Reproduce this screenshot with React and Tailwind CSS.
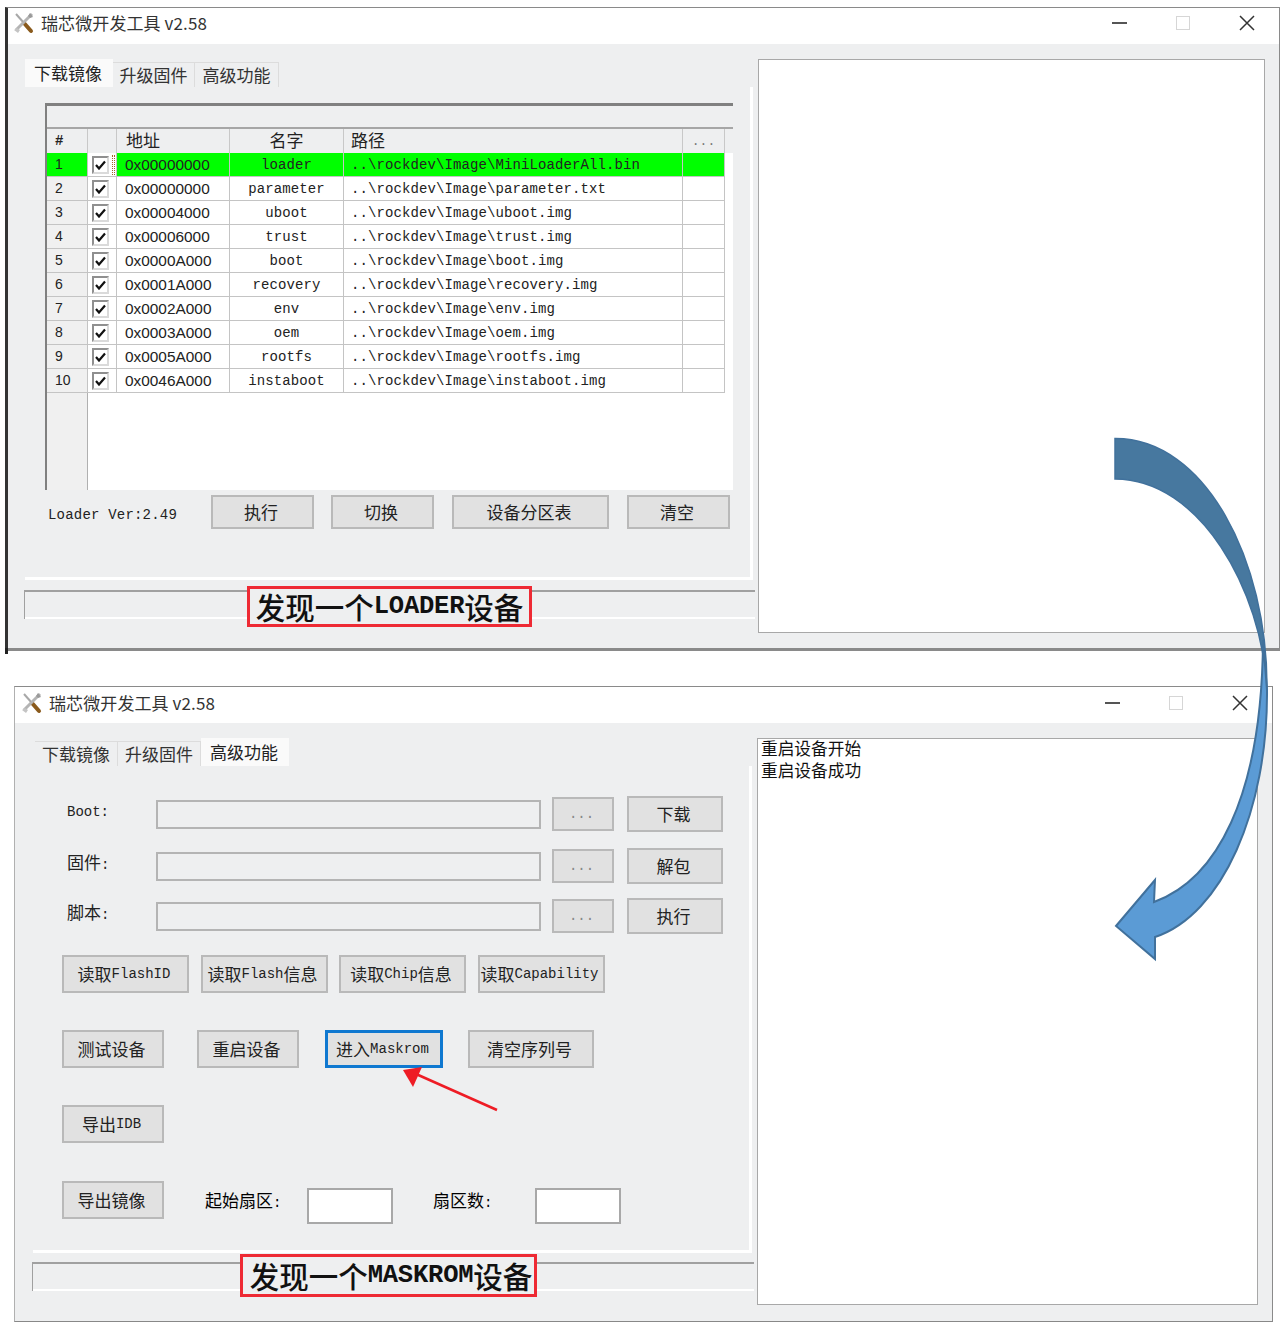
const cjk = "font-['Noto_Sans_CJK_SC',sans-serif]"

const rows = [
  ['1', '0x00000000', 'loader', '..\\rockdev\\Image\\MiniLoaderAll.bin'],
  ['2', '0x00000000', 'parameter', '..\\rockdev\\Image\\parameter.txt'],
  ['3', '0x00004000', 'uboot', '..\\rockdev\\Image\\uboot.img'],
  ['4', '0x00006000', 'trust', '..\\rockdev\\Image\\trust.img'],
  ['5', '0x0000A000', 'boot', '..\\rockdev\\Image\\boot.img'],
  ['6', '0x0001A000', 'recovery', '..\\rockdev\\Image\\recovery.img'],
  ['7', '0x0002A000', 'env', '..\\rockdev\\Image\\env.img'],
  ['8', '0x0003A000', 'oem', '..\\rockdev\\Image\\oem.img'],
  ['9', '0x0005A000', 'rootfs', '..\\rockdev\\Image\\rootfs.img'],
  ['10', '0x0046A000', 'instaboot', '..\\rockdev\\Image\\instaboot.img'],
]

// CJK is drawn bigger than the latin part, like SimSun with a fallback font
const Mix = ({ text }) => (
  <>
    {text.split(/([\x00-\x7f]+)/).filter(Boolean).map((part, i) =>
      /[\x00-\x7f]/.test(part[0])
        ? <span key={i} className="font-['Liberation_Mono',monospace] text-[14px]">{part}</span>
        : <span key={i} className={`${cjk} text-[17px]`}>{part}</span>
    )}
  </>
)

const ToolIcon = () => (
  <svg width="22" height="22" viewBox="0 0 22 22" className="shrink-0">
    <path d="M3 2 L11 11" stroke="#a8a8a8" strokeWidth="2" />
    <path d="M11 11 L18 19" stroke="#8a5a1c" strokeWidth="4" strokeLinecap="round" />
    <path d="M19 2 L3 18" stroke="#b4b4b4" strokeWidth="3" />
    <path d="M17 1 L20 5 L17 6 L15 4 Z" fill="#9a9a9a" />
    <path d="M1 18 L5 21 L7 18 L4 16 Z" fill="#c4c4c4" />
  </svg>
)

const TitleBar = ({ className = '' }) => (
  <div className={`flex h-[36px] shrink-0 items-center bg-white pr-[24px] ${className}`}>
    <ToolIcon />
    <span className={`ml-[6px] ${cjk} text-[17px] tracking-[0.1px] text-[#333]`}>瑞芯微开发工具 v2.58</span>
    <div className="ml-auto flex items-center">
      <div className="h-[2px] w-[15px] bg-[#555]" />
      <div className="ml-[49px] h-[14px] w-[14px] border border-[#d6d6d6]" />
      <svg width="16" height="16" viewBox="0 0 16 16" className="ml-[49px]">
        <path d="M1 1 L15 15 M15 1 L1 15" stroke="#333" strokeWidth="1.5" />
      </svg>
    </div>
  </div>
)

const Tabs = ({ active, widths }) => (
  <div className="flex h-[28px] items-end">
    {['下载镜像', '升级固件', '高级功能'].map((t, i) => (
      <div
        key={t}
        style={{ width: widths[i] }}
        className={
          i === active
            ? `flex h-[28px] items-center justify-center bg-[#fafafa] pb-[1px] pr-[2px] ${cjk} text-[17px] text-[#222]`
            : `flex h-[25px] items-center justify-center border-r border-t border-[#dcdcdc] ${cjk} text-[17px] text-[#333]`
        }
      >
        {t}
      </div>
    ))}
  </div>
)

const Btn = ({ children, className = '', border = 'border-2 border-[#b9b9b9]' }) => (
  <div className={`flex items-center justify-center whitespace-nowrap bg-[#e1e1e1] pr-[3px] text-[#222] ${border} ${className}`}>
    <Mix text={children} />
  </div>
)

const Check = () => (
  <div className="flex h-[18px] w-[17px] items-center justify-center border-2 border-[#8f8f8f] border-b-[#dadada] border-r-[#dadada] bg-white">
    <svg width="11" height="10" viewBox="0 0 11 10">
      <path d="M1 5 L4 8.5 L10 1.5" fill="none" stroke="#111" strokeWidth="2.2" />
    </svg>
  </div>
)

const FlashTable = () => (
  <div className="flex h-[387px] w-[688px] flex-col border-l-2 border-t-[3px] border-[#808080] border-r-[#e4e4e4]">
    <div className="h-[23px] shrink-0 border-b-2 border-[#a6a6a6] bg-[#eeeff0]" />
    <div className={`flex h-[24px] shrink-0 items-center bg-[#eeeff0] text-[17px] text-[#222] ${cjk}`}>
      <div className="h-full w-[41px] border-r border-[#c8c8c8] pl-[8px] font-['Liberation_Mono',monospace] text-[14px] font-bold leading-[24px]">#</div>
      <div className="h-full w-[29px] border-r border-[#c8c8c8]" />
      <div className="h-full w-[113px] border-r border-[#c8c8c8] pl-[9px] leading-[22px]">地址</div>
      <div className="h-full w-[114px] border-r border-[#c8c8c8] text-center leading-[22px]">名字</div>
      <div className="h-full w-[339px] border-r border-[#c8c8c8] pl-[7px] leading-[22px]">路径</div>
      <div className="h-full w-[42px] border-r border-[#c8c8c8] text-center font-['Liberation_Mono',monospace] text-[13px] leading-[26px] text-[#777]">...</div>
    </div>
    <div className="flex min-h-0 flex-1 flex-col bg-white">
      {rows.map((r, i) => {
        const bg = i === 0 ? 'bg-[#00ff00]' : 'bg-white'
        const line = 'border-b border-r border-[#c4c4c4]'
        return (
          <div key={r[0]} className="flex h-[24px] shrink-0 items-center text-[14px] text-[#222]">
            <div className={`flex h-full w-[41px] items-center border-b border-r border-[#c4c4c4] pl-[8px] font-['Liberation_Sans',sans-serif] ${i === 0 ? 'bg-[#00ff00]' : 'bg-[#f0f0f0]'}`}>{r[0]}</div>
            <div className={`relative flex h-full w-[29px] items-center justify-center pr-[3px] ${line}`}>
              <Check />
              {i === 0 && <div className="absolute right-[1px] top-[2px] h-[20px] w-[3px] border-x border-dotted border-[#a0622a]" />}
            </div>
            <div className={`flex h-full w-[113px] items-center pl-[8px] font-['Liberation_Sans',sans-serif] text-[15.4px] ${bg} ${line}`}>{r[1]}</div>
            <div className={`flex h-full w-[114px] items-center justify-center pt-[1px] font-['Liberation_Mono',monospace] tracking-[0.1px] ${bg} ${line}`}>{r[2]}</div>
            <div className={`flex h-full w-[339px] items-center pl-[7px] pt-[1px] font-['Liberation_Mono',monospace] tracking-[0.1px] ${bg} ${line}`}>{r[3]}</div>
            <div className={`h-full w-[42px] ${bg} ${line}`} />
          </div>
        )
      })}
      <div className="min-h-0 w-[41px] flex-1 border-r border-[#b0b0b0] bg-[#f0f0f0]" />
    </div>
  </div>
)

const StatusBar = ({ width, ml, mt, badgeClass, children }) => (
  <div style={{ width, marginLeft: ml, marginTop: mt }} className="relative h-[29px] border-l border-t-2 border-[#a0a0a0]">
    <div className="absolute bottom-0 left-0 h-[2px] w-full bg-white" />
    <div className={`absolute flex items-center justify-center whitespace-nowrap border-[3px] border-[#ee2a34] bg-[#eeeff0] text-[#111] ${badgeClass}`}>
      {children}
    </div>
  </div>
)

const Big = ({ cn, latin }) => (
  <>
    <span className={`${cjk} text-[29.5px] font-medium leading-none`}>{cn[0]}</span>
    <span className="font-['Liberation_Mono',monospace] text-[25.5px] font-bold leading-none tracking-[-0.2px]">{latin}</span>
    <span className={`${cjk} text-[29.5px] font-medium leading-none`}>{cn[1]}</span>
  </>
)

const FormRow = ({ label, action, top }) => (
  <div style={{ marginTop: top }} className="flex h-[36px] items-center">
    <div className="w-[94px] pb-[8px] pl-[5px] text-[#222]"><Mix text={label} /></div>
    <div className="h-[29px] w-[385px] border-2 border-[#b4b4b4] bg-[#eeeff0]" />
    <Btn className="ml-[11px] h-[34px] w-[62px] text-[#888]">...</Btn>
    <Btn className="ml-[13px] h-[36px] w-[96px]">{action}</Btn>
  </div>
)

const SmallInput = () => <div className="mt-[7px] h-[36px] w-[86px] border-2 border-[#a8a8a8] bg-white" />

const AdvancedPanel = () => (
  <div className="h-[487px] w-[719px] border-b-[3px] border-r-[3px] border-white pl-[29px] pt-[30px]">
    <FormRow label="Boot:" action="下载" top={0} />
    <FormRow label="固件:" action="解包" top={16} />
    <FormRow label="脚本:" action="执行" top={14} />
    <div className="mt-[21px] flex gap-[11.5px]">
      <Btn className="h-[38px] w-[127px]">读取FlashID</Btn>
      <Btn className="h-[38px] w-[127px]">读取Flash信息</Btn>
      <Btn className="h-[38px] w-[127px]">读取Chip信息</Btn>
      <Btn className="h-[38px] w-[127px]">读取Capability</Btn>
    </div>
    <div className="mt-[37px] flex">
      <Btn className="h-[38px] w-[102px]">测试设备</Btn>
      <Btn className="ml-[33px] h-[38px] w-[102px]">重启设备</Btn>
      <Btn className="ml-[26px] h-[38px] w-[118px]" border="border-[3px] border-[#0f78d0]">进入Maskrom</Btn>
      <Btn className="ml-[25px] h-[38px] w-[126px]">清空序列号</Btn>
    </div>
    <Btn className="mt-[37px] h-[38px] w-[102px]">导出IDB</Btn>
    <div className="mt-[38px] flex">
      <Btn className="h-[38px] w-[102px]">导出镜像</Btn>
      <div className="ml-[41px] mt-[6px] w-[102px]"><Mix text="起始扇区:" /></div>
      <SmallInput />
      <div className="ml-[40px] mt-[6px] w-[102px]"><Mix text="扇区数:" /></div>
      <SmallInput />
    </div>
  </div>
)

export default function App() {
  return (
    <div className="relative h-[1324px] w-[1282px] overflow-hidden bg-white pt-[7px]">
      {/* top window */}
      <div className="relative ml-[5px] flex h-[644px] w-[1275px] flex-col border-b-[3px] border-l-[3px] border-r border-t border-[#8a8a8a] border-l-[#333] bg-[#eeeff0]">
        <TitleBar className="pb-[7px] pl-[5px]" />
        <div className="flex pl-[17px] pt-[15px]">
          <div className="w-[731px]">
            <Tabs active={0} widths={[88, 82, 84]} />
            <div className="h-[493px] w-[728px] border-b-[3px] border-r-[3px] border-white pl-[20px] pt-[16px]">
              <FlashTable />
              <div className="ml-[3px] mt-[5px] flex items-center">
                <div className="w-[163px] pt-[7px] font-['Liberation_Mono',monospace] text-[14px] tracking-[0.2px] text-[#222]">Loader Ver:2.49</div>
                <Btn className="h-[34px] w-[103px]">执行</Btn>
                <Btn className="ml-[17px] h-[34px] w-[103px]">切换</Btn>
                <Btn className="ml-[18px] h-[34px] w-[157px]">设备分区表</Btn>
                <Btn className="ml-[18px] h-[34px] w-[103px]">清空</Btn>
              </div>
            </div>
            <StatusBar width={731} ml={-1} mt={10} badgeClass="left-[222px] top-[-6px] h-[41px] w-[285px]">
              <Big cn={['发现一个', '设备']} latin="LOADER" />
            </StatusBar>
          </div>
          <div className="ml-[2px] h-[574px] w-[507px] border-[1.5px] border-[#a8a8a8] bg-white" />
        </div>
        <div className="absolute bottom-[-6px] left-[-3px] h-[6px] w-[3px] bg-[#222]" />
      </div>

      {/* bottom window */}
      <div className="ml-[14px] mt-[35px] flex h-[636px] w-[1259px] flex-col border border-[#8a8a8a] border-b-[#888] border-l-[#b0b0b0] bg-[#eeeff0]">
        <TitleBar className="pb-[4px] pl-[6px]" />
        <div className="flex pl-[18px] pt-[15px]">
          <div className="w-[723px]">
            <div className="pl-[2px]"><Tabs active={2} widths={[83, 83, 88]} /></div>
            <AdvancedPanel />
            <StatusBar width={722} ml={-1} mt={9} badgeClass="left-[207px] top-[-10px] h-[43px] w-[297px] pl-[5px]">
              <Big cn={['发现一个', '设备']} latin="MASKROM" />
            </StatusBar>
          </div>
          <div className={`ml-[1px] h-[567px] w-[501px] border-[1.5px] border-[#a8a8a8] bg-white pl-[3px] text-[16.7px] leading-[22px] text-[#111] ${cjk}`}>
            <div className="-mt-[2px]">重启设备开始</div>
            <div>重启设备成功</div>
          </div>
        </div>
      </div>

      {/* curved arrow and the red pointer drawn over both windows */}
      <svg width="1282" height="1324" viewBox="0 0 1282 1324" className="pointer-events-none absolute left-0 top-0">
        <path d="M1115 438.5 C1205 438 1268 560 1267 690 C1262 590 1200 479 1115 479 Z" fill="#47789f" stroke="#41719c" strokeWidth="1.5" />
        <path d="M1267 690 C1268 810 1222 915 1155 937 L1155 959 L1116 926 L1155 880 L1154 902 C1215 880 1262 800 1263 640 Z" fill="#5b9bd5" stroke="#41719c" strokeWidth="2" />
        <path d="M497 1110 L416 1074" stroke="#ee1c25" strokeWidth="2.5" />
        <path d="M403 1070 L422 1067 L413 1087 Z" fill="#ee1c25" />
      </svg>
    </div>
  )
}
